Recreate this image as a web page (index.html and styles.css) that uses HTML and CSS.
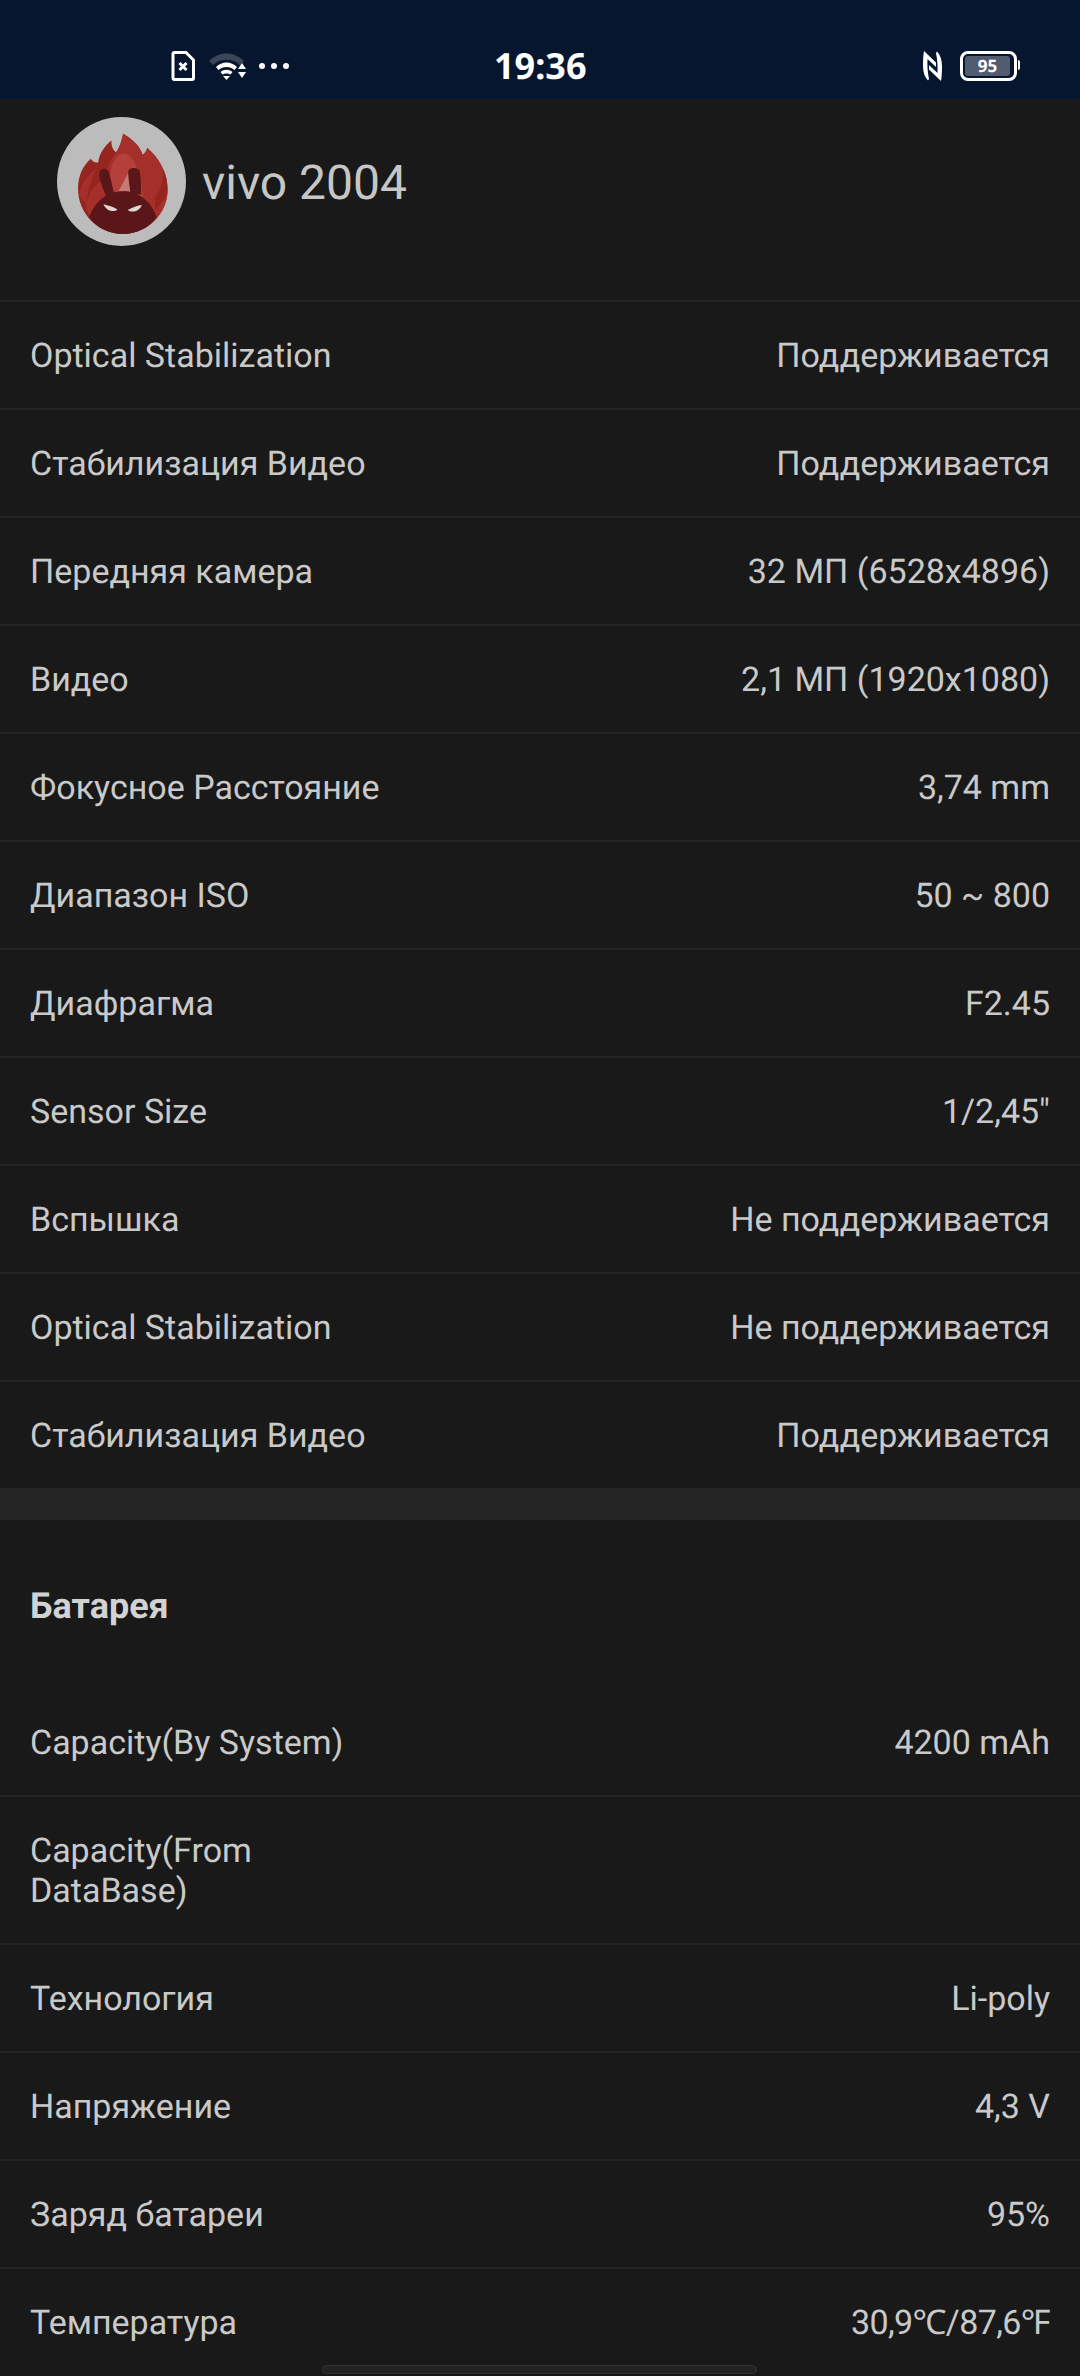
FILE: index.html
```html
<!DOCTYPE html>
<html lang="ru">
<head>
    <meta charset="UTF-8">
    <meta name="viewport" content="width=device-width, initial-scale=1.0">
    <title>vivo 2004</title>
    <link rel="stylesheet" href="styles.css">
</head>
<body>
    <div class="statusbar">
        <div class="status-left">
            <!-- no SIM -->
            <svg class="icon-sim" viewBox="0 0 24 30">
                <path d="M3.500 1.500H15L22.500 9V27a1.500 1.500 0 0 1-1.500 1.500H3.500A1.500 1.500 0 0 1 2 27V3a1.500 1.500 0 0 1 1.500-1.500Z" fill="none" stroke="#fff" stroke-width="3"/>
                <path d="M8.500 12l7 7M15.500 12l-7 7" stroke="#fff" stroke-width="3"/>
            </svg>
            <!-- wifi -->
            <svg class="icon-wifi" viewBox="0 0 38 27">
                <path d="M0 8C10-2 25-2 35 8L31 12C24 5 11 5 4 12Z" fill="#3a4658"/>
                <path d="M7 14C13 8 22 8 28 14L25.500 17C21 13 14 13 9.500 17Z" fill="#fff"/>
                <path d="M11.500 19C15 16 20 16 23.500 19L21.500 21.500C19.500 20 15.500 20 13.500 21.500Z" fill="#fff"/>
                <path d="M14 23H21L17.500 27Z" fill="#fff"/>
                <path d="M33 10L37 16H29ZM29 19H37L33 25Z" fill="#fff"/>
            </svg>
            <div class="dots"><span></span><span></span><span></span></div>
        </div>
        <div class="clock">19:36</div>
        <div class="status-right">
            <!-- NFC -->
            <svg class="icon-nfc" viewBox="0 0 19 30">
                <path d="M1 0L13 11.500V16L4.500 8C4.200 14 4.500 21 6 28L5 29.500C1.500 26 0 21 0 14.500C0 8.500 .3 4 1 0Z" fill="#fff"/>
                <path d="M18 30L6 18.500V14L14.500 22C14.800 16 14.500 9 13 2L14 .5C17.500 4 19 9 19 15.500C19 21.500 18.700 26 18 30Z" fill="#fff"/>
            </svg>
            <div class="battery">
                <div class="battery-fill">95</div>
            </div>
        </div>
    </div>

    <div class="app-header">
        <svg class="logo" viewBox="52 50 386 386">
            <circle cx="245" cy="243" r="193" fill="#bcbcbc"/>
            <!-- flame -->
            <path d="M115 265C115 225 130 195 153 175C158 183 165 188 175 186C178 160 195 135 215 120C214 140 222 152 230 155C240 140 245 120 250 100C275 115 300 135 308 163C314 160 320 152 322 143C355 170 383 215 383 268C383 340 322 400 249 400C175 400 115 340 115 265Z" fill="#97251f"/>
            <path d="M215 175C235 150 245 130 250 100C275 115 300 135 308 163C314 160 320 152 322 143C355 170 383 215 383 268C383 340 322 400 249 400C215 400 170 385 140 330C135 300 160 250 190 240C200 220 205 195 215 175Z" fill="#a5302a"/>
            <path d="M218 190C228 170 240 155 262 160C290 180 300 220 310 290L240 300L205 240Z" fill="#b3403a"/>
            <path d="M118 285C125 245 145 225 170 205C155 235 145 260 140 310Z" fill="#a5302a"/>
            <path d="M345 290C365 265 372 240 368 205C380 225 383 250 381 270C375 295 360 315 345 330Z" fill="#97251f"/>
            <path d="M268 212L285 272H236Z" fill="#c67a74"/>
            <!-- mascot -->
            <path d="M178 222C178 202 202 198 208 216C213 236 218 258 222 278L200 290C192 268 180 245 178 222Z" fill="#5a1618"/>
            <path d="M265 215C266 200 296 198 300 214C303 236 304 262 304 282L272 280C270 258 265 236 265 215Z" fill="#5a1618"/>
            <path d="M148 350C165 300 205 272 250 272C295 272 333 300 350 350C328 382 290 400 249 400C208 400 170 382 148 350Z" fill="#5a1618"/>
            <path d="M191 311C204 314 222 319 233 327C222 336 200 332 191 311Z" fill="#e3d6d5"/>
            <path d="M306 313C294 314 276 320 264 328C274 337 298 334 306 313Z" fill="#e3d6d5"/>
        </svg>
        <div class="app-title">vivo 2004</div>
    </div>

    <div class="rows">
        <div class="row"><span class="label">Optical Stabilization</span><span class="value">Поддерживается</span></div>
        <div class="row"><span class="label">Стабилизация Видео</span><span class="value">Поддерживается</span></div>
        <div class="row"><span class="label">Передняя камера</span><span class="value">32 МП (6528x4896)</span></div>
        <div class="row"><span class="label">Видео</span><span class="value">2,1 МП (1920x1080)</span></div>
        <div class="row"><span class="label">Фокусное Расстояние</span><span class="value">3,74 mm</span></div>
        <div class="row"><span class="label">Диапазон ISO</span><span class="value">50 ~ 800</span></div>
        <div class="row"><span class="label">Диафрагма</span><span class="value">F2.45</span></div>
        <div class="row"><span class="label">Sensor Size</span><span class="value">1/2,45"</span></div>
        <div class="row"><span class="label">Вспышка</span><span class="value">Не поддерживается</span></div>
        <div class="row"><span class="label">Optical Stabilization</span><span class="value">Не поддерживается</span></div>
        <div class="row"><span class="label">Стабилизация Видео</span><span class="value">Поддерживается</span></div>
    </div>

    <div class="band"></div>

    <h2 class="section-title">Батарея</h2>

    <div class="rows">
        <div class="row row-first"><span class="label">Capacity(By System)</span><span class="value">4200 mAh</span></div>
        <div class="row"><span class="label">Capacity(From DataBase)</span><span class="value"></span></div>
        <div class="row"><span class="label">Технология</span><span class="value">Li-poly</span></div>
        <div class="row"><span class="label">Напряжение</span><span class="value">4,3 V</span></div>
        <div class="row"><span class="label">Заряд батареи</span><span class="value">95%</span></div>
        <div class="row"><span class="label">Температура</span><span class="value value-temp">30,9℃/87,6℉</span></div>
    </div>

    <div class="home-bar"></div>
</body>
</html>
```

FILE: styles.css
```css
html, body {
    margin: 0;
    height: 2376px;
    overflow: hidden;
}

body {
    position: relative;
    background: #191919;
    color: #c9c9c9;
    font-family: Roboto, "Noto Sans", sans-serif;
    text-rendering: geometricPrecision;
}

/* status bar */
.statusbar {
    box-sizing: border-box;
    height: 99px;
    padding: 33px 63px 0 171px;
    display: flex;
    align-items: center;
    background: #06162e;
    color: #fff;
}

.status-left {
    width: 323px;
    display: flex;
    align-items: center;
}

.status-right {
    flex: 1;
    display: flex;
    align-items: center;
    justify-content: flex-end;
}

.icon-sim {
    width: 24px;
    height: 30px;
}

.icon-wifi {
    width: 38px;
    height: 27px;
    margin-left: 14px;
}

.dots {
    display: flex;
    gap: 6px;
    margin-left: 12px;
}

.dots span {
    width: 6px;
    height: 6px;
    border-radius: 50%;
    background: #fff;
}

.clock {
    font-family: "Noto Sans", sans-serif;
    font-size: 36px;
    font-weight: 700;
    line-height: 40px;
}

.icon-nfc {
    width: 19px;
    height: 30px;
}

.battery {
    position: relative;
    box-sizing: border-box;
    width: 57px;
    height: 30px;
    margin-left: 18px;
    padding: 2px 4px 2px 2px;
    border: 3px solid #fff;
    border-radius: 8px;
}

.battery::after {
    content: "";
    position: absolute;
    right: -6px;
    top: 6px;
    width: 2px;
    height: 10px;
    border-radius: 0 2px 2px 0;
    background: #fff;
}

.battery-fill {
    height: 20px;
    border-radius: 3px;
    background: #525c70;
    font-family: "Noto Sans", sans-serif;
    font-size: 17px;
    font-weight: 700;
    line-height: 20px;
    text-align: center;
}

/* app header */
.app-header {
    box-sizing: border-box;
    height: 201px;
    padding: 18px 0 0 57px;
    display: flex;
    align-items: flex-start;
}

.logo {
    width: 129px;
    height: 129px;
}

.app-title {
    margin-left: 16px;
    font-size: 48px;
    line-height: 131px;
    color: #c6c6c6;
}

/* spec rows */
.row {
    box-sizing: border-box;
    min-height: 108px;
    padding: 34px 30px 32px;
    display: flex;
    justify-content: space-between;
    align-items: center;
    border-top: 2px solid #242424;
    font-size: 34px;
    line-height: 40px;
}

.row-first {
    border-top-color: transparent;
}

.label {
    max-width: 355px;
}

.value-temp {
    letter-spacing: -0.6px;
}

.band {
    height: 32px;
    background: #252525;
}

.section-title {
    box-sizing: border-box;
    height: 167px;
    margin: 0;
    padding: 66px 30px 0;
    font-size: 36px;
    font-weight: 700;
    line-height: 40px;
    color: #d2d2d2;
}

.home-bar {
    position: absolute;
    left: 322px;
    bottom: 2px;
    box-sizing: border-box;
    width: 435px;
    height: 9px;
    border: 1px solid #333;
    border-radius: 5px;
    background: #232323;
}
```
